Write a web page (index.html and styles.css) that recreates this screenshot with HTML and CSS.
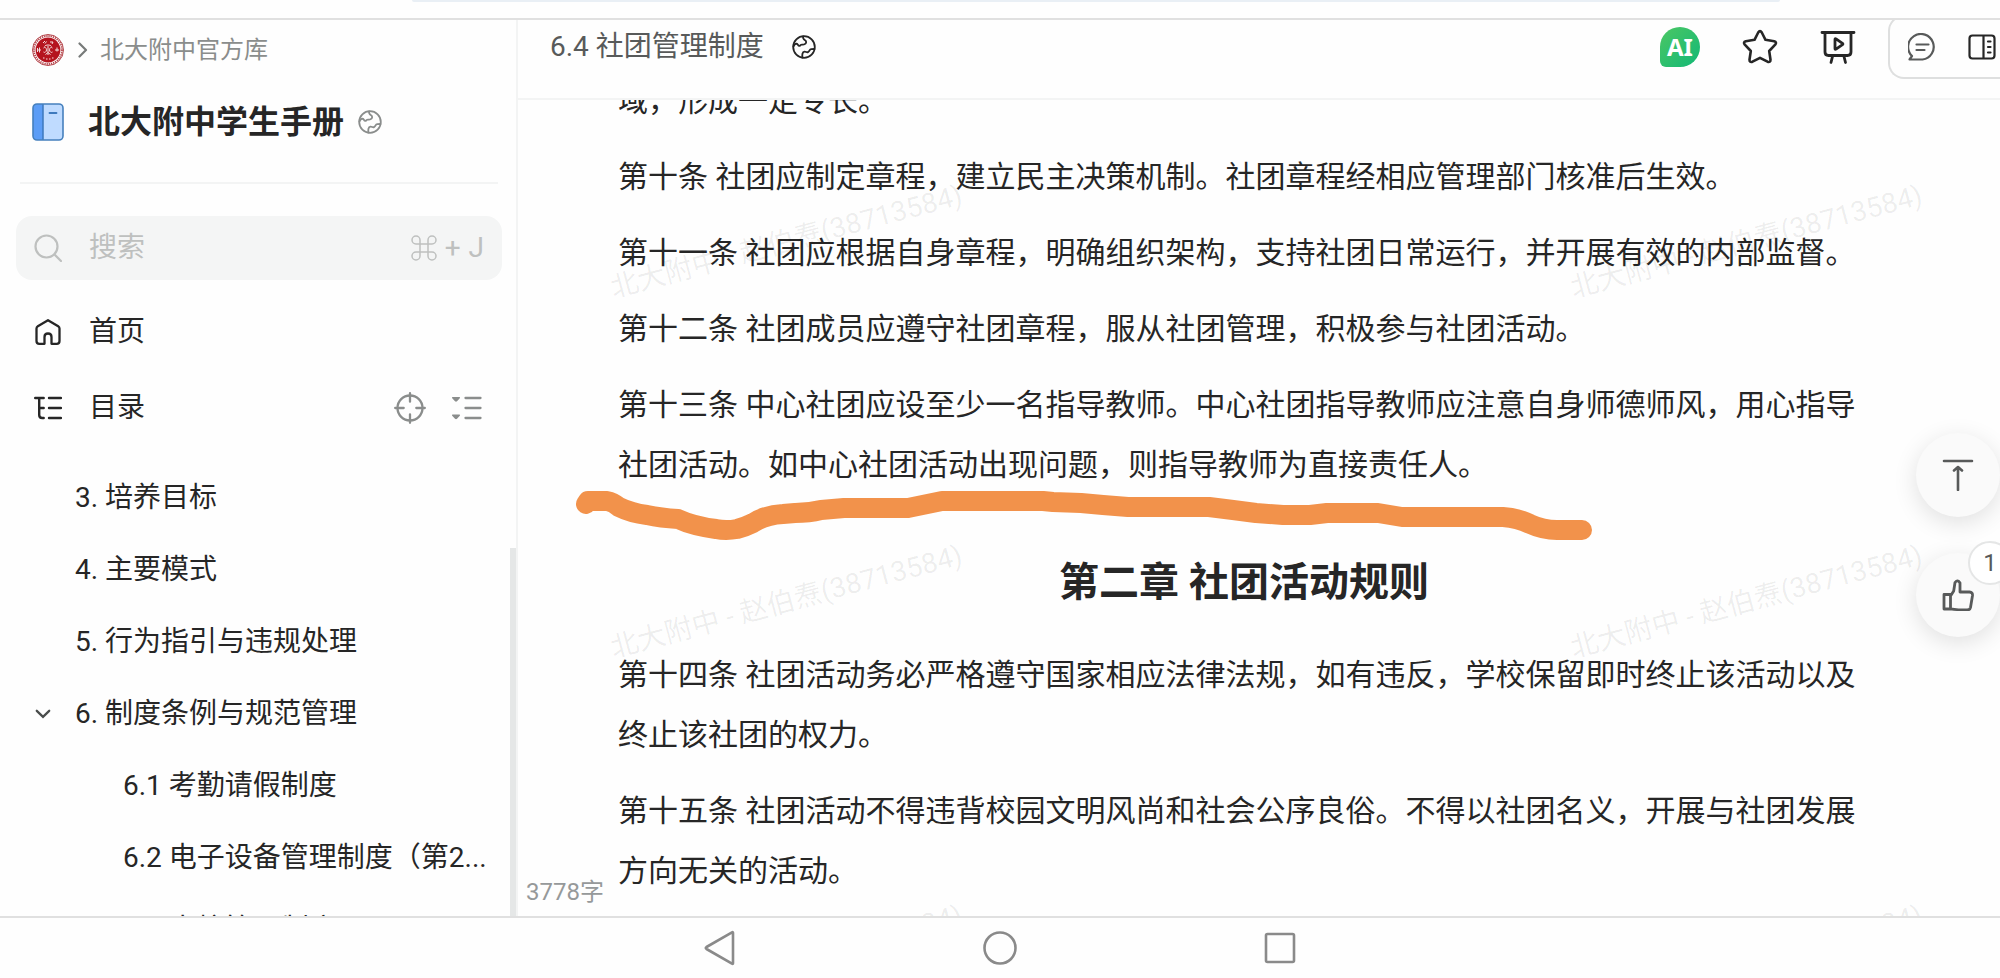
FILE: index.html
```html
<!DOCTYPE html>
<html lang="zh-CN">
<head>
<meta charset="utf-8">
<meta name="viewport" content="width=device-width, initial-scale=1">
<title>6.4 社团管理制度</title>
<link rel="stylesheet" href="styles.css">
</head>
<body>
<svg class="defs" aria-hidden="true">
  <symbol id="globe" viewBox="0 0 24 24">
    <g fill="none" stroke="currentColor" stroke-width="1.8" stroke-linecap="round" stroke-linejoin="round">
      <circle cx="12" cy="12" r="10.8"/>
      <path d="M1.5 11.5c1-2.800 3.200-3.500 4.200-2 .8 1.300 2 2.200 3 .6.800-1.200 2.200 0 3.800-.800 2-1 2.200-3 .6-4-1.200-.8-2.500-1.600-2-3.800"/>
      <path d="M10.500 22.500c-.5-2.500-.3-5.500 2-5.800 1.400-.2 2.300 1 3.500.4 1.400-.700 1.500-2.600 3.200-2.900l3.200-.2"/>
    </g>
  </symbol>
</svg>
<div class="browser-bar"><div class="address-edge"></div></div>
<div class="app">
  <aside class="sidebar">
    <nav class="crumbs" aria-label="路径">
      <svg class="emblem" viewBox="0 0 32 32" aria-hidden="true">
        <circle cx="16" cy="16" r="15.500" fill="#fff" stroke="#b5464c"/>
        <circle cx="16" cy="16" r="14" fill="none" stroke="#b5464c" stroke-width="1.800" stroke-dasharray="1.300 .9"/>
        <circle cx="16" cy="16" r="12.400" fill="#b5141f"/>
        <g fill="none" stroke="#f6dfe0" stroke-width="1">
          <path d="M12.500 12.500c1-2 6-2 7 0M11.500 14c1.500-1.500 3 0 3 2s-2 3-3 2M20.500 14c-1.500-1.500-3 0-3 2s2 3 3 2M16 12v9M13.500 20.500l2.500-2 2.500 2"/>
          <path d="M5.500 14v4M7.500 13.500v5M5 16h4M23 16h4M25 13.500v4M11 9l2-2M13 9.500l1.500-2M18 8h3l-1 2M11 24h1.500M14 25h1.500M17 25h1.500M20 24h1.500"/>
        </g>
      </svg>
      <svg class="crumb-arrow" viewBox="0 0 10 16" aria-hidden="true"><path d="M1.500 1.500 8 8l-6.500 6.500" fill="none" stroke="#777a79" stroke-width="2.200" stroke-linecap="round" stroke-linejoin="round"/></svg>
      <a href="#">北大附中官方库</a>
    </nav>
    <div class="book">
      <svg class="book-icon" viewBox="0 0 32 38" aria-hidden="true">
        <rect x="1" y="1" width="30" height="36" rx="4" fill="#bfdbff"/>
        <path d="M5 1h6v36H5a4 4 0 0 1-4-4V5a4 4 0 0 1 4-4z" fill="#5c9df6"/>
        <path d="M11 1v36" stroke="#3d79bd" stroke-width="1.500"/>
        <rect x="1" y="1" width="30" height="36" rx="4" fill="none" stroke="#4680bd" stroke-width="1.600"/>
        <path d="M17.500 10h7" stroke="#3d79bd" stroke-width="1.800" stroke-linecap="round"/>
      </svg>
      <h1>北大附中学生手册</h1>
      <svg class="book-globe"><use href="#globe"/></svg>
    </div>
    <hr class="divider">
    <label class="search">
      <svg class="side-icon muted" viewBox="0 0 28 28" aria-hidden="true"><g fill="none" stroke="currentColor" stroke-width="2.200" stroke-linecap="round"><circle cx="12.500" cy="12.500" r="11"/><path d="m20.500 20.500 6.500 6.500"/></g></svg>
      <input type="search" placeholder="搜索" aria-label="搜索">
      <kbd><svg class="cmd" viewBox="0 0 26 26" aria-label="⌘"><path d="M9 9h8v8H9zM9 9H5a4 4 0 1 1 4-4zM17 9V5a4 4 0 1 1 4 4zM17 17h4a4 4 0 1 1-4 4zM9 17v4a4 4 0 1 1-4-4z" fill="none" stroke="currentColor" stroke-width="1.500"/></svg>+<span>J</span></kbd>
    </label>
    <a class="side-row" href="#">
      <svg class="side-icon" viewBox="0 0 28 28" aria-hidden="true"><path d="M14 2.200 3.800 8.200Q2.500 9 2.500 10.500v12.500q0 2.800 2.800 2.800h5.200v-6.800q0-3.500 3.500-3.500t3.500 3.500v6.800h5.200q2.800 0 2.800-2.800V10.500q0-1.500-1.300-2.300z" fill="none" stroke="currentColor" stroke-width="2.300" stroke-linejoin="round"/></svg>
      <span>首页</span>
    </a>
    <div class="side-row">
      <svg class="side-icon" viewBox="0 0 28 28" aria-hidden="true"><path d="M1.200 4h8.500M5.200 4v17q0 3 3 3h1.500M5.200 14h4.500M15 4h12M15 14h12M15 24h12" fill="none" stroke="currentColor" stroke-width="2.400" stroke-linecap="round"/></svg>
      <span>目录</span>
      <button class="locate" type="button" aria-label="定位"><svg viewBox="0 0 32 32"><g fill="none" stroke="currentColor" stroke-width="2.300" stroke-linecap="round"><circle cx="16" cy="16" r="12.500"/><path d="M16 1.200v8.500M16 22.300v8.500M1.200 16h8.500M22.300 16h8.500"/></g></svg></button>
      <button type="button" aria-label="折叠"><svg viewBox="0 0 32 32"><path d="M15.500 6h15M15.500 16h15M15.500 26h15" fill="none" stroke="currentColor" stroke-width="2.300" stroke-linecap="round"/><path d="M2.500 5h7q1 .5.300 1.300l-2.800 3q-1 .8-2 0l-2.800-3q-.7-.8.300-1.300zM2.500 22.500h7q1 .5.300 1.300l-2.800 3q-1 .8-2 0l-2.800-3q-.7-.8.300-1.300z" fill="currentColor"/></svg></button>
    </div>
    <div class="tree-pane">
      <ul class="tree">
        <li><a href="#">3. 培养目标</a></li>
        <li><a href="#">4. 主要模式</a></li>
        <li><a href="#">5. 行为指引与违规处理</a></li>
        <li class="open">
          <svg class="caret" viewBox="0 0 16 10" aria-hidden="true"><path d="m1.800 1.800 6.200 6 6.200-6" fill="none" stroke="#4a4d4c" stroke-width="2.300" stroke-linecap="round"/></svg>
          <a href="#">6. 制度条例与规范管理</a></li>
        <li class="sub"><a href="#">6.1 考勤请假制度</a></li>
        <li class="sub"><a href="#">6.2 电子设备管理制度（第2...</a></li>
        <li class="sub"><a href="#">6.3 出校管理制度</a></li>
      </ul>
      <div class="scrollbar"></div>
    </div>
  </aside>
  <main class="content">
    <header class="doc-head">
      <h2>6.4 社团管理制度</h2>
      <svg class="head-globe"><use href="#globe"/></svg>
      <div class="actions">
        <button class="ai" type="button">AI</button>
        <button type="button" aria-label="收藏"><svg viewBox="0 0 36 36"><path d="M16.200 3.500q1.800-2.800 3.600 0l3.700 7.300 8.700 1.500q3 .8 1 3.300l-6 6.400 1.300 8.800q0 3-3 1.900L18 28.800l-7.500 3.900q-3 1.100-3-1.900l1.300-8.800-6-6.400q-2-2.500 1-3.300l8.700-1.500z" fill="none" stroke="currentColor" stroke-width="2.600" stroke-linejoin="round"/></svg></button>
        <button type="button" aria-label="演示"><svg viewBox="0 0 36 36"><g fill="none" stroke="currentColor" stroke-width="2.800" stroke-linecap="round" stroke-linejoin="round"><path d="M2 3.500h32M5 4v19q0 3.500 3.500 3.500h19q3.500 0 3.500-3.500V4M12.500 27.500l-1.500 6M24 27.500l1.500 6"/><path d="M15 10.500v9q0 1.200 1 .6l6.500-4.500q.8-.6 0-1.200L16 9.900q-1-.6-1 .6z"/></g></svg></button>
        <div class="panel-tools">
          <button class="comment" type="button" aria-label="评论"><svg viewBox="0 0 28 28"><path d="M1.500 26.500 4 23A12.800 12.800 0 1 1 14.500 26.500zM8.500 11.500h12M8.500 17h8" fill="none" stroke="currentColor" stroke-width="2.200" stroke-linecap="round" stroke-linejoin="round"/></svg></button>
          <button class="toc" type="button" aria-label="大纲"><svg viewBox="0 0 28 28"><path d="M4.500 2.500h19q3 0 3 3v17q0 3-3 3h-19q-3 0-3-3v-17q0-3 3-3zM15.500 3v22M20 8.500h2.500M20 14h2.500M20 19.500h2.500" fill="none" stroke="currentColor" stroke-width="2.200" stroke-linecap="round"/></svg></button>
        </div>
      </div>
    </header>
    <div class="viewport">
      <article>
        <p>域，形成一定专长。</p>
        <p>第十条 社团应制定章程，建立民主决策机制。社团章程经相应管理部门核准后生效。</p>
        <p>第十一条 社团应根据自身章程，明确组织架构，支持社团日常运行，并开展有效的内部监督。</p>
        <p>第十二条 社团成员应遵守社团章程，服从社团管理，积极参与社团活动。</p>
        <p>第十三条 中心社团应设至少一名指导教师。中心社团指导教师应注意自身师德师风，用心指导社团活动。如中心社团活动出现问题，则指导教师为直接责任人。</p>
        <h3>第二章 社团活动规则</h3>
        <p>第十四条 社团活动务必严格遵守国家相应法律法规，如有违反，学校保留即时终止该活动以及终止该社团的权力。</p>
        <p>第十五条 社团活动不得违背校园文明风尚和社会公序良俗。不得以社团名义，开展与社团发展方向无关的活动。</p>
      </article>
      <div class="watermarks" aria-hidden="true">
        <span>北大附中 - 赵伯焘(38713584)</span><span>北大附中 - 赵伯焘(38713584)</span>
        <span>北大附中 - 赵伯焘(38713584)</span><span>北大附中 - 赵伯焘(38713584)</span>
        <span>北大附中 - 赵伯焘(38713584)</span><span>北大附中 - 赵伯焘(38713584)</span>
      </div>
      <svg class="brush" viewBox="0 0 1020 60" aria-hidden="true"><path d="M13 22 15 19H34Q40 20 46 25 58 31 74 33 88 36 105 37 120 44 143 47 153 49 164 47 172 45 180 41 192 33 210 32L222 31Q236 31 248 28L271 26H335L369 19H470L480 20 508 21 530 23 555 25H636L660 28 683 31 710 33H737L754 31H805L829 35H930Q945 36 957 42 970 48 984 48H1009" fill="none" stroke="#f2924b" stroke-width="20" stroke-linecap="round" stroke-linejoin="round"/></svg>
      <span class="count">3778字</span>
      <div class="floaters">
        <button type="button" aria-label="回到顶部"><svg viewBox="0 0 32 32"><path d="M2 2h28M16 8v23M12 11.500 16 8l4 3.500" fill="none" stroke="currentColor" stroke-width="2.600" stroke-linecap="round" stroke-linejoin="round"/></svg></button>
        <button type="button" aria-label="点赞"><svg viewBox="0 0 32 32"><path d="M2 15.500h6.500V30H2zM8.500 17l3.200-5 1.300-8.500q2.800-3.500 5 .5L18 13h9.500q3.300.3 3 3.500L28.500 28.500Q28 31 25 31q-9 0-16.500-1.200" fill="none" stroke="currentColor" stroke-width="2.800" stroke-linecap="round" stroke-linejoin="round"/></svg><span class="badge">1</span></button>
      </div>
    </div>
  </main>
</div>
<nav class="system-nav" aria-label="系统导航">
  <button type="button" aria-label="返回"><svg viewBox="0 0 36 36"><path d="M31 2.800v30.400q0 1-1 .4L4.500 19q-1.500-1 0-2L30 2.400q1-.6 1 .4z"/></svg></button>
  <button type="button" aria-label="主页"><svg viewBox="0 0 36 36"><circle cx="18" cy="18" r="15.500"/></svg></button>
  <button type="button" aria-label="最近"><svg viewBox="0 0 36 36"><rect x="4" y="4" width="28" height="28" rx="1.500"/></svg></button>
</nav>
</body>
</html>
```

FILE: styles.css
```css
* {
  box-sizing: border-box;
}

body {
  margin: 0;
  height: 100vh;
  display: flex;
  flex-direction: column;
  overflow: hidden;
  background: #fefefe;
  color: #262626;
  font-family: Roboto, "Noto Sans CJK SC", sans-serif;
  font-size: 28px;
  line-height: 40px;
}

a {
  color: inherit;
  text-decoration: none;
}

button {
  display: flex;
  align-items: center;
  justify-content: center;
  padding: 0;
  border: 0;
  background: none;
  color: inherit;
  font: inherit;
}

svg {
  display: block;
  flex: none;
}

h1, h2, h3, p, ul {
  margin: 0;
}

.defs {
  position: absolute;
  width: 0;
  height: 0;
}

.browser-bar {
  flex: none;
  height: 20px;
  border-bottom: 2px solid #e0e0e0;
}

.address-edge {
  height: 2px;
  margin: 0 11% 0 20.6%;
  background: #e9eff5;
  border-radius: 0 0 8px 8px;
}

.app {
  flex: 1;
  min-height: 0;
  display: flex;
}

/* Sidebar */
.sidebar {
  flex: 0 0 518px;
  min-width: 0;
  display: flex;
  flex-direction: column;
  border-right: 2px solid #f3f4f4;
}

.crumbs {
  display: flex;
  align-items: center;
  padding: 10px 32px 0;
  font-size: 24px;
  color: #8a8d8c;
}

.emblem {
  width: 32px;
  height: 32px;
  margin-right: 14px;
}

.crumb-arrow {
  width: 10px;
  height: 16px;
  margin-right: 12px;
}

.book {
  display: flex;
  align-items: center;
  height: 64px;
  margin-top: 20px;
  padding: 0 32px;
}

.book-icon {
  width: 32px;
  height: 38px;
  margin-right: 24px;
}

.book h1 {
  font-size: 32px;
  font-weight: 700;
}

.book-globe {
  width: 24px;
  height: 24px;
  margin-left: 14px;
  color: #8a8d8c;
}

.divider {
  height: 2px;
  margin: 28px 18px 32px 20px;
  border: 0;
  background: #f3f4f4;
}

.search {
  display: flex;
  align-items: center;
  flex: none;
  height: 64px;
  margin: 0 14px 14px 16px;
  padding: 0 18px;
  border-radius: 16px;
  background: #f4f5f5;
  color: #bec0bf;
}

.search input {
  flex: 1;
  min-width: 0;
  padding: 0;
  border: 0;
  outline: 0;
  background: none;
  font: inherit;
  color: #262626;
}

.search input::placeholder {
  color: #bec0bf;
}

.search kbd {
  display: flex;
  align-items: center;
  gap: 8px;
  font: inherit;
}

.cmd {
  width: 26px;
  height: 26px;
}

.side-icon {
  width: 28px;
  height: 28px;
  margin-right: 27px;
}

.side-row {
  display: flex;
  align-items: center;
  flex: none;
  height: 76px;
  padding: 0 34px;
}

.side-row button {
  width: 32px;
  height: 32px;
  color: #8a8d8c;
}

.side-row button svg {
  width: 32px;
  height: 32px;
}

.side-row .locate {
  margin: 0 24px 0 auto;
}

.tree-pane {
  position: relative;
  flex: 1;
  min-height: 0;
  margin-top: 12px;
  overflow: hidden;
}

.tree {
  padding: 4px 24px 0 0;
  list-style: none;
}

.tree li {
  display: flex;
  align-items: center;
  height: 72px;
  padding-left: 75px;
  white-space: nowrap;
}

.tree .open {
  padding-left: 35px;
}

.tree .sub {
  padding-left: 123px;
}

.caret {
  width: 16px;
  height: 10px;
  margin-right: 24px;
}

.scrollbar {
  position: absolute;
  right: 0;
  top: 90px;
  bottom: 0;
  width: 6px;
  background: #e5e7e7;
}

/* Document */
.content {
  flex: 1;
  min-width: 0;
  display: flex;
  flex-direction: column;
}

.doc-head {
  display: flex;
  align-items: center;
  flex: none;
  height: 80px;
  padding: 0 0 24px 32px;
  border-bottom: 2px solid #f3f4f4;
  overflow: hidden;
}

.doc-head h2 {
  font-size: 28px;
  font-weight: 400;
  color: #585a5a;
}

.head-globe {
  width: 24px;
  height: 24px;
  margin-left: 28px;
}

.actions {
  display: flex;
  align-items: center;
  gap: 42px;
  margin-left: auto;
}

.actions svg {
  width: 36px;
  height: 36px;
}

.actions .ai {
  width: 40px;
  height: 40px;
  border-radius: 20px 20px 20px 6px;
  background: linear-gradient(135deg, #4cc764, #12b876);
  color: #fff;
  font: 700 24px/40px "Noto Sans", sans-serif;
}

.actions .panel-tools {
  display: flex;
  align-items: center;
  gap: 32px;
  width: 112px;
  height: 64px;
  margin: 0 0 0 -10px;
  padding-left: 18px;
  border: 2px solid #dedfdf;
  border-right: 0;
  border-radius: 16px 0 0 16px;
}

.panel-tools svg {
  width: 28px;
  height: 28px;
}

.comment {
  color: #585a5a;
}

.viewport {
  position: relative;
  flex: 1;
  min-height: 0;
  overflow: hidden;
}

article {
  margin-top: -29px;
  padding: 0 130px 0 100px;
  font-size: 30px;
  line-height: 60px;
}

article p {
  margin-bottom: 16px;
}

article h3 {
  margin: 58px 0 32px;
  font-size: 40px;
  font-weight: 700;
  text-align: center;
}

.watermarks {
  position: absolute;
  top: -38px;
  left: -212px;
  display: grid;
  grid-template-columns: 960px 960px;
  grid-auto-rows: 360px;
  place-items: center;
  pointer-events: none;
  color: rgba(0, 0, 0, 0.07);
}

.watermarks span {
  transform: rotate(-15deg);
  white-space: nowrap;
}

.brush {
  position: absolute;
  top: 382px;
  left: 55px;
  width: 1020px;
  height: 60px;
}

.count {
  position: absolute;
  left: 8px;
  bottom: 4px;
  font-size: 24px;
  color: #96999a;
}

.floaters {
  position: absolute;
  top: 333px;
  right: 0;
  display: grid;
  gap: 36px;
}

.floaters button {
  position: relative;
  width: 84px;
  height: 84px;
  border-radius: 50%;
  background: #fafafa;
  box-shadow: 0 6px 24px rgba(0, 0, 0, 0.12);
  color: #585a5a;
}

.floaters button svg {
  width: 32px;
  height: 32px;
}

.badge {
  position: absolute;
  top: -12px;
  right: -12px;
  width: 44px;
  height: 44px;
  border: 2px solid #e5e6e6;
  border-radius: 50%;
  background: #fff;
  font-size: 24px;
}

/* System buttons */
.system-nav {
  display: flex;
  align-items: center;
  justify-content: center;
  gap: 244px;
  flex: none;
  height: 62px;
  border-top: 2px solid #e0e0e0;
}

.system-nav svg {
  width: 36px;
  height: 36px;
  fill: none;
  stroke: #8a8a8a;
  stroke-width: 2.6;
  stroke-linejoin: round;
}
```
